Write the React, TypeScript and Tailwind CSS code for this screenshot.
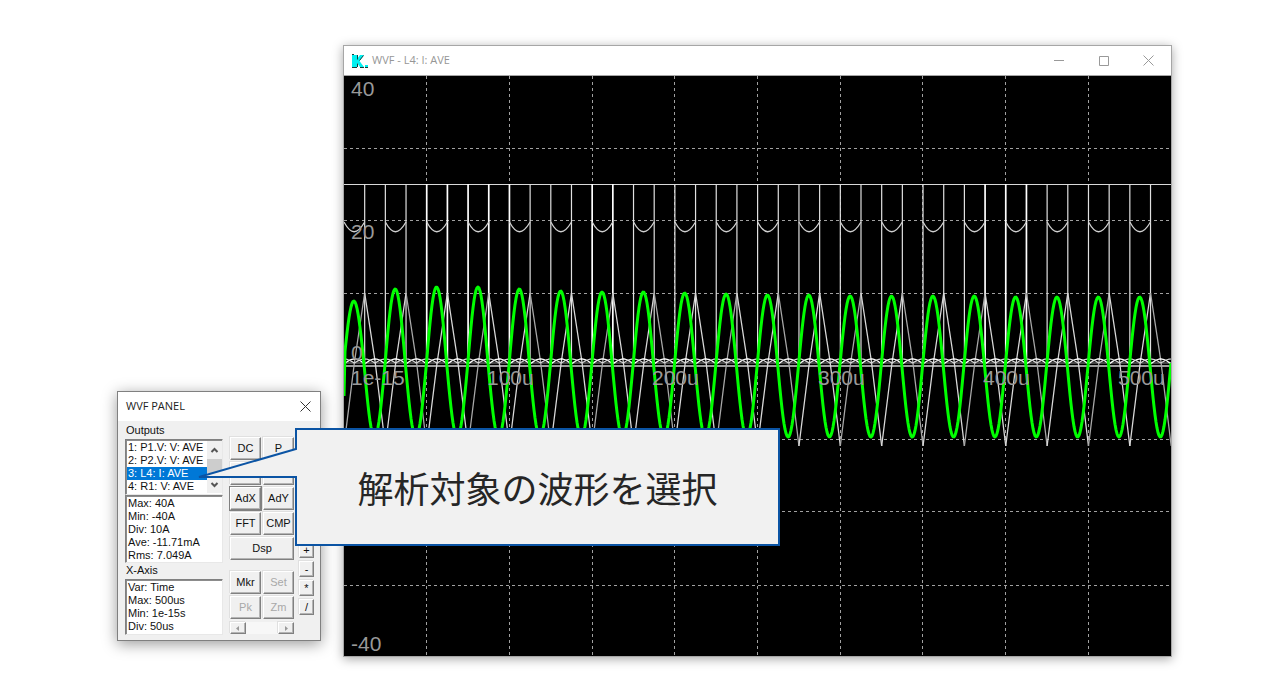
import React, { useState } from 'react';

const OUTPUTS = ['1: P1.V: V: AVE', '2: P2.V: V: AVE', '3: L4: I: AVE', '4: R1: V: AVE'];
const Y_AXIS = ['Max: 40A', 'Min: -40A', 'Div: 10A', 'Ave: -11.71mA', 'Rms: 7.049A'];
const X_AXIS = ['Var: Time', 'Max: 500us', 'Min: 1e-15s', 'Div: 50us'];

// Plot geometry: ten 50us divisions across, eight 10A divisions down
const W = 827;
const H = 580;
const ZERO = 290;
const HALF = 20.68;
const BOLD_EDGES = [4, 5, 6, 7, 8, 12, 13, 31, 32, 33];
const PEAKS = [65, 77, 79, 79, 77, 75, 74, 74, 73, 72, 71, 71, 70, 70, 70, 70, 69, 69, 69, 69];

function trace(fn: (x: number) => number, from = 0, to = W) {
  let d = '';
  for (let x = from; x <= to; x += 1) {
    d += `${d ? 'L' : 'M'}${x.toFixed(1)} ${fn(x).toFixed(1)}`;
  }
  return d;
}

const inductor = trace((x) => {
  if (x === 0) return ZERO + 30;
  const s = Math.sin((Math.PI * (x + 0.5)) / HALF);
  const amp = s > 0 ? PEAKS[Math.min(19, Math.floor(x / (HALF * 2)))] : 71;
  return ZERO - amp * s;
});
const rippleA = trace((x) => 288 - 5 * Math.abs(Math.sin((Math.PI * x) / HALF)));
const rippleB = trace((x) => 287 - 4 * Math.abs(Math.cos((Math.PI * x) / HALF)));

function triangle(k: number) {
  const x0 = k * HALF;
  const up = k % 2 === 0;
  const a = up ? 370 : 217;
  const b = up ? 217 : 370;
  return `M${x0} ${a}L${x0 + HALF / 2} ${up ? 287 : 285}L${x0 + HALF} ${b}`;
}

function Plot() {
  const edges = Array.from({ length: 39 }, (_, i) => i + 1);
  return (
    <svg viewBox={`0 0 ${W} ${H}`} className="block h-auto w-full bg-black" role="img" aria-label="WVF">
      <g stroke="#a0a0a0" strokeWidth="1" strokeDasharray="3 3">
        {[1, 2, 3, 4, 5, 6, 7, 8, 9].map((i) => (
          <line key={i} x1={Math.floor(i * 82.7) + 0.5} x2={Math.floor(i * 82.7) + 0.5} y1="0" y2={H} />
        ))}
        {[72.5, 144.5, 217.5, 363.5, 435.5, 509.5].map((y) => (
          <line key={y} x1="0" x2={W} y1={y} y2={y} />
        ))}
      </g>

      <g fill="none" stroke="#ffffff">
        <line x1="0" x2={W} y1="108.5" y2="108.5" stroke="#d8d8d8" />
        <line x1="0" x2={W} y1="290" y2="290" stroke="#d0d0d0" strokeWidth="1.4" />
        <line x1="0" x2={W} y1="287" y2="287" stroke="#8c8c8c" />
        {edges.map((k) => (
          <line
            key={k}
            x1={k * HALF}
            x2={k * HALF}
            y1="108"
            y2="288"
            stroke={BOLD_EDGES.includes(k) ? '#ffffff' : '#e0e0e0'}
            strokeWidth={BOLD_EDGES.includes(k) ? 1.7 : 1.2}
          />
        ))}
        {edges.concat(0).filter((k) => k % 2 === 0).map((k) => (
          <path
            key={k}
            d={`M${k * HALF} 146C${k * HALF + 7} 159 ${k * HALF + 13} 159 ${k * HALF + HALF} 146`}
            stroke="#d0d0d0"
            strokeWidth="1.3"
          />
        ))}
        {Array.from({ length: 40 }, (_, k) => (
          <path key={k} d={triangle(k)} stroke={k % 3 === 0 ? '#a8a8a8' : '#d8d8d8'} strokeWidth="1.3" />
        ))}
        <path d={rippleA} strokeWidth="1.3" />
        <path d={rippleB} strokeWidth="1.2" stroke="#d8d8d8" />
      </g>

      <path d={inductor} fill="none" stroke="#00ff00" strokeWidth="3" strokeLinejoin="round" />

      <g fill="#999999" fontFamily="'Liberation Sans', Arial, sans-serif" fontSize="21">
        <text x="7" y="20">40</text>
        <text x="7" y="163">20</text>
        <text x="7" y="284">0</text>
        <text x="7" y="575">-40</text>
        <text x="7" y="309">1e-15</text>
        <text x="143" y="309">100u</text>
        <text x="308" y="309">200u</text>
        <text x="474" y="309">300u</text>
        <text x="639" y="309">400u</text>
        <text x="774" y="309">500u</text>
      </g>
    </svg>
  );
}

function ScopeWindow() {
  return (
    <section className="min-w-0 flex-1 border border-[#a6a6a6] bg-white shadow-[0_2px_10px_rgba(0,0,0,0.35)]">
      <header className="flex h-[30px] items-center border-b border-[#a6a6a6] pl-[7px]">
        <svg width="17" height="14" viewBox="0 0 17 14" aria-hidden="true">
          <path d="M1 1h5v4l3-4h4L8.500 7l4.500 6H9L6 9v4H1z" fill="#00f0f0" />
          <path d="M6.500 1v4.500M12.500 1.500L8.500 6.500M6.500 9.500v3.500M1 13.500h5M9 13.500h4M1 .5h2" fill="none" stroke="#163c3c" strokeWidth="1" />
          <path d="M14 11h3v2h-3z" fill="#00f0f0" />
          <path d="M14 13h3v1h-3z" fill="#163c3c" />
        </svg>
        <h1 className="ml-1 flex-1 font-['Open_Sans'] text-[11px] text-[#969696]">WVF - L4: I: AVE</h1>
        <button aria-label="Minimize" className="flex h-full w-[45px] items-center justify-center">
          <svg width="10" height="10" stroke="#999999"><path d="M0 4.500h10" /></svg>
        </button>
        <button aria-label="Maximize" className="flex h-full w-[45px] items-center justify-center">
          <svg width="10" height="10" fill="none" stroke="#999999"><path d="M.5.5h9v9h-9z" /></svg>
        </button>
        <button aria-label="Close" className="flex h-full w-[45px] items-center justify-center">
          <svg width="11" height="11" stroke="#999999"><path d="M.5.5l10 10M10.5.5l-10 10" /></svg>
        </button>
      </header>
      <Plot />
    </section>
  );
}

const raised = 'flex items-center justify-center border border-t-white border-l-white border-r-[#808080] border-b-[#808080] bg-[#f0f0f0] shadow-[inset_-1px_-1px_0_#b4b4b4,-1px_-1px_0_#e0e0e0]';
const sunken = 'border border-t-[#808080] border-l-[#808080] border-r-[#e8e8e8] border-b-[#e8e8e8] bg-white shadow-[inset_1px_1px_0_#8c8c8c]';

function KeyButton({ label = '', className = '', disabled = false }: { label?: string; className?: string; disabled?: boolean }) {
  return (
    <button disabled={disabled} className={`${raised} h-[23px] text-[11px] leading-none disabled:text-[#a8a8a8] ${className}`}>
      {label}
    </button>
  );
}

function Readout({ lines, className = '' }: { lines: string[]; className?: string }) {
  return (
    <div className={`${sunken} pl-[2px] whitespace-nowrap ${className}`}>
      {lines.map((line) => (
        <p key={line}>{line}</p>
      ))}
    </div>
  );
}

function Callout() {
  return (
    <div className="absolute top-[36px] left-[177px] z-10 flex h-[118px] w-[485px] items-center justify-center border-2 border-[#0b54a4] bg-[#f1f1f1]">
      <svg width="102" height="34" viewBox="0 0 102 34" className="absolute top-[16px] -left-[100px]" aria-hidden="true">
        <path d="M102 3L100 3L2 31L102 31z" fill="#f1f1f1" />
        <path d="M99 1V3L2 31H99V34" fill="none" stroke="#0b54a4" strokeWidth="2" />
      </svg>
      <p className="font-['Noto_Sans_CJK_JP',sans-serif] text-4xl whitespace-nowrap text-[#262626]">解析対象の波形を選択</p>
    </div>
  );
}

function PanelWindow() {
  const [selected, setSelected] = useState(2);

  return (
    <section className="relative mb-4 w-[204px] shrink-0 border border-[#808080] bg-[#f0f0f0] shadow-[0_3px_14px_rgba(0,0,0,0.4)]">
      <header className="flex h-[29px] items-center justify-between bg-white pr-[9px] pl-2">
        <h2 className="font-['Open_Sans'] text-[11px] text-[#222222]">WVF PANEL</h2>
        <button aria-label="Close">
          <svg width="11" height="11" stroke="#333333"><path d="M.5.5l10 10M10.5.5l-10 10" /></svg>
        </button>
      </header>

      <div className="flex pb-[5px] pl-[7px] font-['Liberation_Sans'] text-[11px] leading-[13px] text-[#111111]">
        <div className="w-[98px]">
          <h3 className="h-[18px] pt-[3px] pl-px">Outputs</h3>
          <div className={`${sunken} flex py-px pl-px`}>
            <div role="listbox" aria-label="Outputs" className="w-[80px]">
              {OUTPUTS.map((name, i) => (
                <button
                  key={name}
                  role="option"
                  aria-selected={i === selected}
                  onClick={() => setSelected(i)}
                  className={`block w-full pl-px text-left whitespace-nowrap ${i === selected ? 'bg-[#0078d7] text-white' : ''}`}
                >
                  {name}
                </button>
              ))}
            </div>
            <div className="flex flex-1 flex-col items-center bg-[#f0f0f0]">
              <svg width="9" height="18" fill="none" stroke="#555555" strokeWidth="2"><path d="M1.500 11l3-3 3 3" /></svg>
              <span className="h-[14px] w-full bg-[#cdcdcd]" />
              <svg width="9" height="18" fill="none" stroke="#555555" strokeWidth="2"><path d="M1.500 10l3 3 3-3" /></svg>
            </div>
          </div>
          <Readout lines={Y_AXIS} className="pt-px" />
          <h3 className="h-4 pt-px pl-px">X-Axis</h3>
          <Readout lines={X_AXIS} className="py-px" />
        </div>

        <div className="ml-[7px] w-[64px] pt-4">
          <div className="grid grid-cols-2 gap-[2px]">
            <KeyButton label="DC" />
            <KeyButton label="P" />
            <KeyButton />
            <KeyButton />
            <KeyButton label="AdX" className="outline outline-[#808080]" />
            <KeyButton label="AdY" />
            <KeyButton label="FFT" />
            <KeyButton label="CMP" />
            <KeyButton label="Dsp" className="col-span-2" />
          </div>
          <div className="mt-[11px] grid grid-cols-2 gap-[2px]">
            <KeyButton label="Mkr" />
            <KeyButton label="Set" disabled />
            <KeyButton label="Pk" disabled />
            <KeyButton label="Zm" disabled />
          </div>
          <div className="mt-[3px] flex justify-between bg-[#f7f7f7]">
            <button aria-label="Scroll left" className={`${raised} h-3 w-4`}>
              <svg width="4" height="5" fill="#999999"><path d="M3 0v5L0 2.500z" /></svg>
            </button>
            <button aria-label="Scroll right" className={`${raised} h-3 w-4`}>
              <svg width="4" height="5" fill="#999999"><path d="M1 0v5l3-2.500z" /></svg>
            </button>
          </div>
        </div>

        <div className="ml-[5px] flex w-[15px] flex-col gap-[3px] pt-[121px]">
          {['+', '-', '*', '/'].map((op) => (
            <button key={op} className={`${raised} h-4 leading-none`}>{op}</button>
          ))}
        </div>
      </div>

      <Callout />
    </section>
  );
}

export default function App() {
  return (
    <main className="flex min-h-screen items-end gap-[22px] bg-white pr-[106px] pb-[30px] pl-[117px]">
      <PanelWindow />
      <ScopeWindow />
    </main>
  );
}
